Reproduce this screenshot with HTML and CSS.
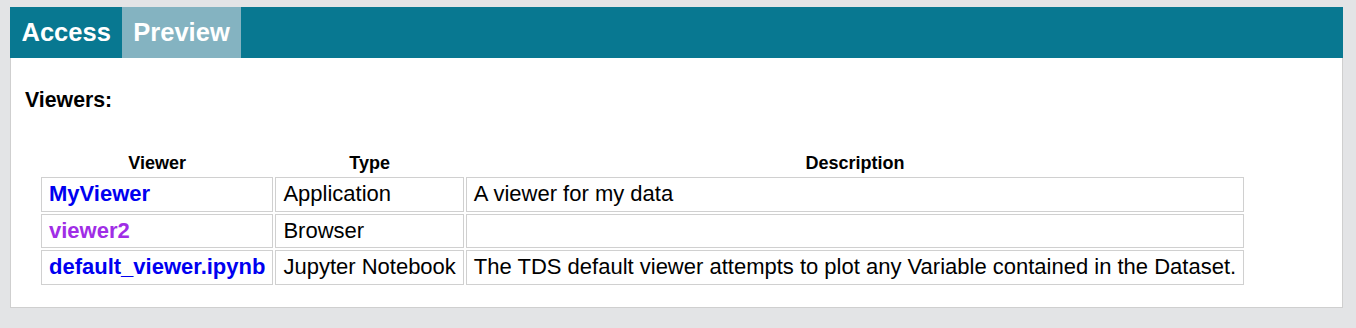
FILE: index.html
```html
<!DOCTYPE html>
<html lang="en">
<head>
  <meta charset="UTF-8" />
  <title>Viewers</title>
  <link rel="stylesheet" href="styles.css">
</head>
<body>
  <!-- Tab bar -->
  <div class="tabs">
    <div class="tab">Access</div>
    <div class="tab active">Preview</div>
  </div>
  <!-- Preview panel -->
  <div class="panel">
    <h3>Viewers:</h3>
    <table class="viewers">
      <tr>
        <th>Viewer</th>
        <th>Type</th>
        <th>Description</th>
      </tr>
      <tr>
        <td><a href="#" class="link">MyViewer</a></td>
        <td>Application</td>
        <td>A viewer for my data</td>
      </tr>
      <tr>
        <td><a href="#" class="link visited">viewer2</a></td>
        <td>Browser</td>
        <td></td>
      </tr>
      <tr>
        <td><a href="#" class="link">default_viewer.ipynb</a></td>
        <td>Jupyter Notebook</td>
        <td>The TDS default viewer attempts to plot any Variable contained in the Dataset.</td>
      </tr>
    </table>
  </div>
</body>
</html>
```

FILE: styles.css
```css
/* Global */
body {
  margin: 0;
  padding: 7px 13px 0 10px;
  background: #e3e4e6;
  font-family: "Liberation Sans", Arial, sans-serif;
  color: #000;
}
.tabs {
  display: flex;
  height: 51px;
  background: #087891;
}
.tab {
  padding: 0 11.5px;
  font-size: 25.5px;
  font-weight: bold;
  color: #fff;
  line-height: 51px;
  height: 51px;
}
.tab.active {
  padding: 0 11px;
  background: #84b3c1;
}
.panel {
  background: #fff;
  border: 1px solid #cfcfcf;
  border-top: none;
  padding: 30px 14px 20px 14px;
}
h3 {
  margin: 0 0 36px 0;
  font-size: 21.3px;
  line-height: 24px;
}
/* Viewer table */
.viewers {
  margin-left: 14px;
  border-spacing: 2px;
  font-size: 22px;
}
.viewers th {
  font-size: 18px;
  line-height: 21px;
  padding: 3px 7px 1px 7px;
}
.viewers td {
  border: 1px solid #d0d0d0;
  padding: 4px 7px;
  line-height: 24.5px;
}
.link {
  color: #0000f0;
  font-weight: bold;
  text-decoration: none;
}
.link.visited {
  color: #a02de6;
}
```
